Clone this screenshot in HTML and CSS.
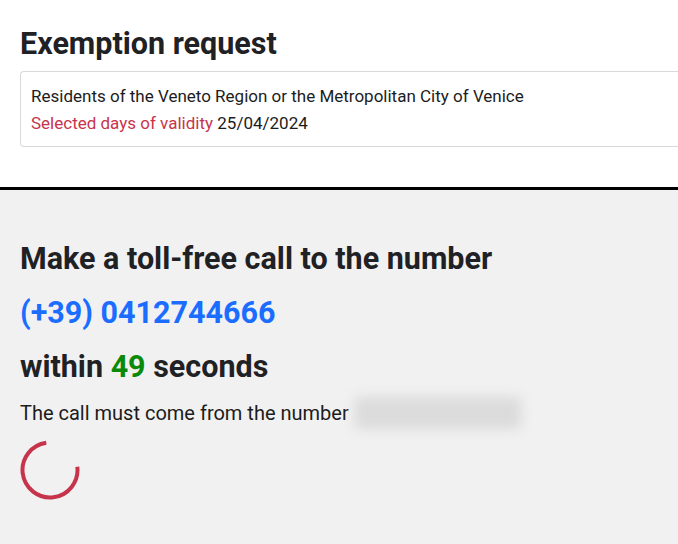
FILE: index.html
```html
<!DOCTYPE html>
<html lang="en">
<head>
<meta charset="utf-8">
<title>Exemption request</title>
<link rel="stylesheet" href="styles.css">
</head>
<body>
<section class="top">
  <h1 class="title">Exemption request</h1>
  <div class="card">
    <p class="line">Residents of the Veneto Region or the Metropolitan City of Venice</p>
    <p class="line"><span class="label">Selected days of validity</span> 25/04/2024</p>
  </div>
</section>
<section class="call">
  <h2 class="big">Make a toll-free call to the number</h2>
  <h2 class="big phone">(+39) 0412744666</h2>
  <h2 class="big">within <span class="secs">49</span> seconds</h2>
  <div class="from">
    <span class="from-text">The call must come from the number</span>
    <span class="hidden-number"></span>
  </div>
  <svg class="spinner" width="60" height="60" viewBox="0 0 60 60">
    <circle cx="30" cy="30" r="27.5" fill="none" stroke="#c6344c" stroke-width="4" stroke-dasharray="129 200" transform="rotate(-7 30 30)"/>
  </svg>
</section>
</body>
</html>
```
FILE: styles.css
```css
html, body {
  margin: 0;
  padding: 0;
  overflow: hidden;
}
body {
  font-family: Roboto, "Liberation Sans", sans-serif;
  color: #1c1c1c;
  background: #f1f1f1;
  height: 544px;
}
.top {
  background: #fff;
  padding: 27px 0 40px 20px;
  border-bottom: 3px solid #000;
}
.title {
  margin: 0 0 10px;
  font-size: 30.5px;
  line-height: 34px;
  font-weight: 700;
  color: #1f2125;
}
.card {
  border: 1px solid #d9d9d9;
  border-right: none;
  border-radius: 4px 0 0 4px;
  padding: 11px 10px 9px;
  margin-right: -4px;
}
.line {
  margin: 0;
  font-size: 17px;
  line-height: 27px;
}
.label {
  color: #c6344c;
}
.call {
  padding: 42px 20px 0;
}
.big {
  margin: 0;
  font-size: 30.5px;
  line-height: 54px;
  font-weight: 700;
  color: #1f2125;
}
.phone {
  color: #1a6dff;
}
.secs {
  color: #0a8a0a;
}
.from {
  display: flex;
  align-items: center;
  height: 36px;
  margin-top: 1px;
}
.from-text {
  font-size: 20px;
  line-height: 30px;
}
.hidden-number {
  display: block;
  width: 166px;
  height: 32px;
  margin-left: 6px;
  background: #dbdbdb;
  filter: blur(6px);
}
.spinner {
  display: block;
  margin-top: 9px;
}
```
